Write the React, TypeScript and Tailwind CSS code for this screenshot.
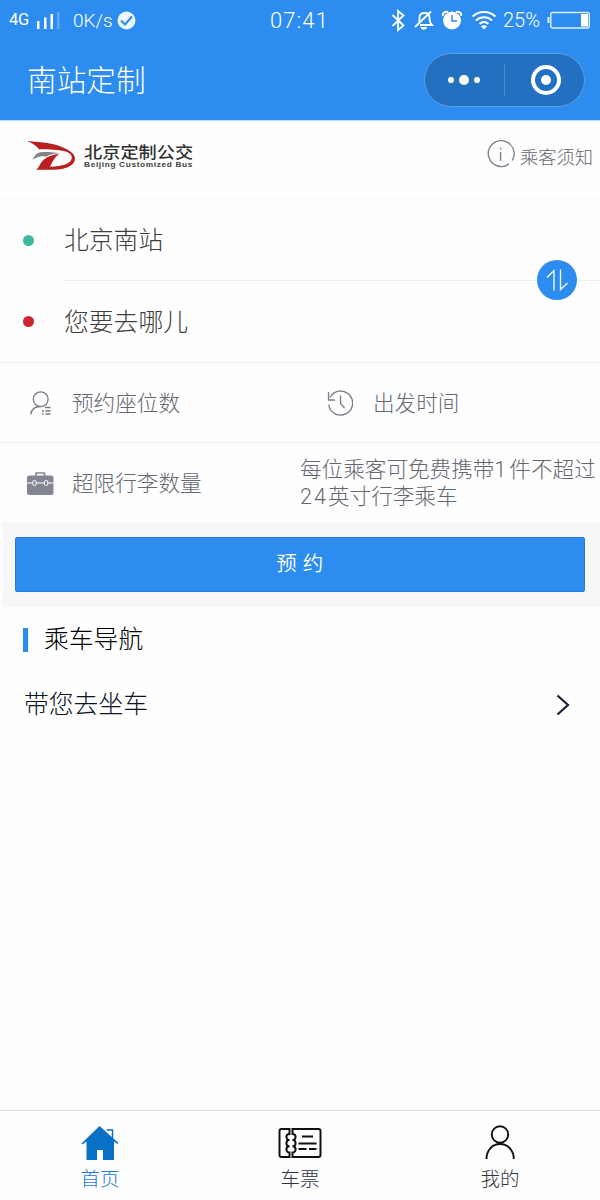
import React from 'react';

function StatusBar() {
  return (
    <div className="flex h-10 items-center text-white">
      <span className="ml-[9px] w-[22px] text-[16.500px] leading-none tracking-[-0.2px]">4G</span>
      <svg className="ml-[5px] h-[17px] w-6" viewBox="36 12 24 17" fill="#fff">
        <rect x="37" y="21" width="2.500" height="8" />
        <rect x="44" y="17.500" width="2.500" height="11.500" />
        <rect x="50.500" y="14" width="2.500" height="15" />
        <rect x="57" y="12" width="2.500" height="17" opacity=".25" />
      </svg>
      <span className="ml-[13px] w-[41px] whitespace-nowrap text-[19px] font-light leading-none">0K/s</span>
      <svg className="ml-[3px] h-[19px] w-[19px]" viewBox="0 0 19 19">
        <circle cx="9.500" cy="9.500" r="9" fill="#ebf6ff" />
        <path d="M4 9.500l4 4 7-8" fill="none" stroke="#2d8cf0" strokeWidth="2" />
      </svg>
      <span className="ml-[134px] w-[60px] whitespace-nowrap pt-0.5 text-[22px] font-light leading-none tracking-[1.1px]">07:41</span>
      <svg className="ml-[61px] h-6 w-[109px]" viewBox="391 8 109 24" fill="none" stroke="#fff" strokeWidth="1.800">
        <path d="M392.500 15l11 10.500-5.500 4.500V11l5.500 4.500-11 10.500" />
        <path d="M418 24.500c2-2 1.500-4 1.500-6.500 0-3 1.500-5 5-5 3.300 0 5 2 5 5 0 4 .5 5 2.500 7H420M415 27L431 11.500" />
        <path d="M420.500 27h6.500c-.5 3.500-6 3.500-6.500 0z" fill="#fff" stroke="none" />
        <circle cx="452" cy="20.500" r="9" fill="#fff" stroke="none" />
        <path d="M443 16c-1-3 2-5 5-4M461 16c1-3-2-5-5-4" strokeWidth="2" />
        <path d="M452 15v6h5" stroke="#2d8cf0" strokeWidth="1.500" />
        <path d="M472.500 16.500c6.500-6 16.500-6 23 0M476 20.500c4.700-4.300 11.300-4.300 16 0M479.500 24c2.800-2.500 6.200-2.500 9 0" strokeWidth="2" />
        <path d="M481 26.500q3-2.500 6 0l-3 3z" fill="#fff" stroke="none" />
      </svg>
      <span className="ml-[3px] w-[43px] text-[20px] font-light leading-none">25%</span>
      <svg className="ml-px h-[18px] w-[43px]" viewBox="547 11 43 18" fill="none" stroke="#e0f0ff">
        <path d="M548.500 17v6" strokeWidth="2" />
        <rect x="550.800" y="12.500" width="38.500" height="15.500" rx="2" strokeWidth="1.400" />
        <rect x="581" y="14" width="7" height="12.500" fill="#fff" stroke="none" />
      </svg>
    </div>
  );
}

function NavBar() {
  return (
    <div className="flex h-20 justify-between pl-[27px] pr-[15px] text-white">
      <h1 className="pt-[26px] text-[29.700px] font-light leading-[30px]">南站定制</h1>
      <div className="mt-[13px] flex h-[54px] w-[161px] items-center rounded-full border border-[#5f9fdf] bg-[#2470c0]">
        <div className="flex h-8 w-20 items-center justify-center gap-[5px] border-r border-[#4b8dd0] pr-px">
          <span className="size-1.5 rounded-full bg-white" />
          <span className="size-2.5 rounded-full bg-white" />
          <span className="size-1.5 rounded-full bg-white" />
        </div>
        <div className="flex flex-1 justify-center">
          <div className="ml-0.5 flex size-[30px] items-center justify-center rounded-full border-4 border-white">
            <span className="size-2.5 rounded-full bg-white" />
          </div>
        </div>
      </div>
    </div>
  );
}

function BrandRow() {
  return (
    <div className="flex h-[78px] border-b border-[#f7f7f7]">
      <svg className="ml-[27px] mt-[19px] h-[31px] w-12" viewBox="27 140 48 31">
        <path d="M27 141C36 142 50 142.500 58 145.500 69 149.500 75 153.500 75 158.500 75 165.500 66 169.700 53 169.700H36C39 168 40 163 44 159.500 48 156 53 154.500 59 154 54.500 157.500 52 162 50 166.700 63 166.700 71.800 163.500 71.800 157.500 71.800 151.500 62 149.300 39 149.300 36.500 145.500 32 143 27 141z" fill="#b91e20" />
        <path d="M32.500 159.800C35 155 37.500 152 43 152 50 152 54 152.500 60.500 153 54 153.500 49 154.500 46.500 156.700 41 155.500 37.500 156.500 32.500 159.800z" fill="#828282" />
      </svg>
      <div className="ml-[9px] flex w-[113px] flex-col pt-[23px] text-[#303030]">
        <span className="origin-top-left scale-y-[0.9] whitespace-nowrap text-[18.200px] font-medium leading-[18px]">北京定制公交</span>
        <svg className="-mt-px h-2.5 w-[112px] overflow-visible" viewBox="0 0 112 10">
          <text x="0" y="6" textLength="109" lengthAdjust="spacingAndGlyphs" fontFamily="Liberation Sans" fontWeight="700" fontSize="6.500" letterSpacing="0.500" fill="#404040">Beijing Customized Bus</text>
        </svg>
      </div>
      <svg className="ml-[289px] mt-[19px] size-[29px]" viewBox="487 139 29 29" fill="none" stroke="#808490" strokeWidth="1.400">
        <path d="M510 162.900a12.900 12.900 0 1 1 3-3.200" />
        <path d="M501.600 151v9M501.600 146.800v1.800" />
      </svg>
      <span className="ml-[5px] mt-7 whitespace-nowrap text-[18.300px] font-light leading-[18px] text-[#656872]">乘客须知</span>
    </div>
  );
}

function RouteRows() {
  return (
    <div className="relative text-[24.800px] font-light leading-none text-[#404040]">
      <div className="flex h-[82px] items-center">
        <span className="ml-[23px] size-[11px] rounded-full bg-[#3fb8a0]" />
        <span className="ml-[30px] flex h-full flex-1 items-center border-b border-[#eeeeee] pt-[3px]">北京南站</span>
      </div>
      <div className="flex h-[82px] items-center border-b border-[#eeeeee]">
        <span className="ml-[23px] size-[11px] rounded-full bg-[#cf2430]" />
        <span className="ml-[30px] pt-1">您要去哪儿</span>
      </div>
      <button className="absolute left-[537px] top-[61px] flex size-10 items-center justify-center rounded-full bg-[#2d8cf0]">
        <svg className="h-6 w-6" viewBox="545 268 24 24" fill="none" stroke="#fff" strokeWidth="1.300">
          <path d="M547 277.500l7-7v20M560.500 269.500v20l7-6.500" />
        </svg>
      </button>
    </div>
  );
}

function BookingFields() {
  return (
    <div className="text-[21.600px] font-light leading-none text-[#656872]">
      <div className="flex h-20 items-center border-b border-[#eeeeee]">
        <svg className="ml-[30px] h-6 w-[22px]" viewBox="30 391 22 24" fill="none" stroke="#777b86" strokeWidth="1.300">
          <circle cx="40.700" cy="399.300" r="7.400" />
          <path d="M30.700 414.500c.8-5 4.500-8 9.500-8M45 407.500h5.500M42 411h2M45.500 411h5M42 414h1.500M45.500 414h5" />
        </svg>
        <span className="ml-5 w-[255px] pt-0.5">预约座位数</span>
        <svg className="size-[26px]" viewBox="327 390 26 26" fill="none" stroke="#777b86" strokeWidth="1.300">
          <path d="M330 397.500a12 12 0 1 1-1.300 7M328.500 392v8h6.500M340.500 395.500v8l4 4.500" />
        </svg>
        <span className="ml-5 pt-0.5">出发时间</span>
      </div>
      <div className="flex h-[79px] items-center">
        <svg className="ml-[27px] mt-0.5 h-[23px] w-[27px]" viewBox="27 472 27 23">
          <path d="M36 476v-3h8.500v3" fill="none" stroke="#828693" strokeWidth="1.600" />
          <rect x="27" y="475.500" width="26.500" height="19.500" rx="2.500" fill="#828693" />
          <path d="M27 483h5.500M36.500 483H44M48 483h5.500" stroke="#fff" strokeWidth="1.200" />
          <rect x="32.800" y="480.500" width="3.400" height="5" rx="1.500" fill="#828693" stroke="#fff" />
          <rect x="44.400" y="480.500" width="3.400" height="5" rx="1.500" fill="#828693" stroke="#fff" />
        </svg>
        <span className="ml-[18px] w-[228px] pt-0.5">超限行李数量</span>
        <span className="whitespace-nowrap pt-px leading-[27px]">每位乘客可免费携带<span className="tracking-[3px]">1</span>件不超过<br /><span className="tracking-[2px]">24</span>英寸行李乘车</span>
      </div>
    </div>
  );
}

function TabBar() {
  return (
    <nav className="mt-auto grid h-[90px] grid-cols-3 border-t border-[#dddddd] text-[19.500px] font-light leading-[20px] text-[#303543]">
      <div className="flex flex-col items-center pt-[13px] text-[#2478d5]">
        <svg className="h-[38px] w-[38px]" viewBox="81 1124 38 38">
          <path d="M106.500 1130h6v8" fill="none" stroke="#0870c5" strokeWidth="1.500" />
          <path d="M99.500 1126L118.500 1143l-1 1-3.500-2.500v18.500h-11v-10h-6v10H86.500V1141.500l-4 3-1-1z" fill="#0870c5" />
        </svg>
        <span className="mt-2">首页</span>
      </div>
      <div className="flex flex-col items-center pt-[13px]">
        <svg className="h-[38px] w-11" viewBox="278 1124 44 38" fill="none" stroke="#111" strokeWidth="2">
          <path d="M289.500 1129h-8q-2 0-2 2v24q0 2 2 2h8v-4.500a3.100 3.100 0 0 1 0-6.200 3.100 3.100 0 0 1 0-6.200 3.100 3.100 0 0 1 0-6.200zM292.500 1129h26q2 0 2 2v24q0 2-2 2h-26v-4.500a3.100 3.100 0 0 0 0-6.200 3.100 3.100 0 0 0 0-6.200 3.100 3.100 0 0 0 0-6.200z" />
          <path d="M302 1136.500h11M298.500 1143.500h18M298.500 1149h8M309 1149h7.500" />
        </svg>
        <span className="mt-2">车票</span>
      </div>
      <div className="flex flex-col items-center pt-[13px]">
        <svg className="h-[38px] w-8" viewBox="484 1124 32 38" fill="none" stroke="#111" strokeWidth="1.900">
          <circle cx="500" cy="1134.500" r="8.200" />
          <path d="M486.500 1159c0-8.500 5.500-15 13.500-15s13.800 6.500 13.800 15" />
        </svg>
        <span className="mt-2">我的</span>
      </div>
    </nav>
  );
}

export default function App() {
  return (
    <div className="flex h-[1200px] w-[600px] flex-col overflow-hidden bg-[#fefefe] font-['Roboto','Noto_Sans_CJK_SC',sans-serif]">
      <header className="h-[121px] border-b border-[#b5dafd] bg-[#2d8cf0]">
        <StatusBar />
        <NavBar />
      </header>
      <BrandRow />
      <RouteRows />
      <BookingFields />
      <div className="ml-0.5 h-[85px] bg-[#f7f7f7] py-[15px] pl-[13px] pr-[15px]">
        <button className="flex h-[55px] w-full items-center justify-center rounded-[2px] border border-[#267bd6] bg-[#2d8cf0] text-[20.500px] font-[350] leading-none tracking-[0.5px] text-white">预 约</button>
      </div>
      <div className="flex h-[65px] items-center pl-[23px]">
        <span className="h-6 w-[5px] bg-[#2d8cf0]" />
        <h2 className="ml-4 pt-0.5 text-[24.800px] font-light leading-none text-black">乘车导航</h2>
      </div>
      <div className="flex h-[66px] items-center justify-between pl-6 pr-[30px] text-[24.800px] font-light leading-none text-[#0c1428]">
        <span>带您去坐车</span>
        <svg className="h-[22px] w-[14px]" viewBox="0 0 14 22" fill="none" stroke="#172033" strokeWidth="2.200">
          <path d="M1.500 1.500L12 11 1.500 20.500" />
        </svg>
      </div>
      <TabBar />
    </div>
  );
}
